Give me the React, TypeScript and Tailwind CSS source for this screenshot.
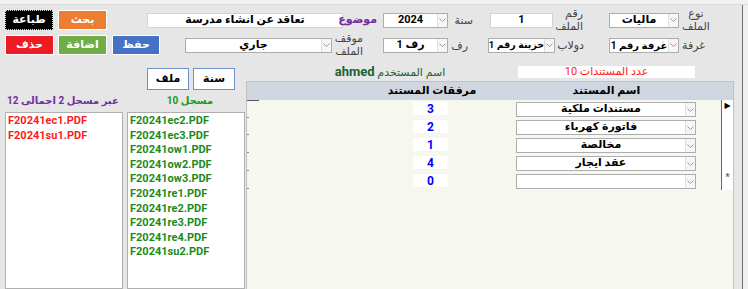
import React from 'react';

const Chevron = () => (
  <svg width="7" height="4" viewBox="0 0 7 4">
    <path d="M0.5 0.5 L3.5 3.5 L6.5 0.5" fill="none" stroke="#9a9a9a" strokeWidth="1" />
  </svg>
);

function Combo({ text, box, size = 'text-[11px]' }: { text: string; box: string; size?: string }) {
  return (
    <div className={`flex bg-white border border-[#adadad] ${box}`}>
      <div dir="rtl" className={`flex-1 flex items-center justify-center overflow-hidden whitespace-nowrap font-bold text-black ${size}`}>
        {text}
      </div>
      <div className="w-[10px] flex items-center justify-center border-l border-[#dedede] bg-[#f6f6f6]">
        <Chevron />
      </div>
    </div>
  );
}

function Btn({ label, cls }: { label: string; cls: string }) {
  return (
    <div className={`flex items-center justify-center h-[20px] border text-white font-bold text-[11px] ${cls}`}>
      {label}
    </div>
  );
}

function Label({ lines, cls }: { lines: string[]; cls: string }) {
  return (
    <div dir="rtl" className={`flex flex-col text-[11px] leading-[13px] text-[#444] whitespace-nowrap ${cls}`}>
      {lines.map((l) => (
        <span key={l}>{l}</span>
      ))}
    </div>
  );
}

const registered = [
  'F20241ec2.PDF',
  'F20241ec3.PDF',
  'F20241ow1.PDF',
  'F20241ow2.PDF',
  'F20241ow3.PDF',
  'F20241re1.PDF',
  'F20241re2.PDF',
  'F20241re3.PDF',
  'F20241re4.PDF',
  'F20241su2.PDF',
];
const missing = ['F20241ec1.PDF', 'F20241su1.PDF'];

const docs = [
  { name: 'مستندات ملكية', count: '3' },
  { name: 'فاتورة كهرباء', count: '2' },
  { name: 'مخالصة', count: '1' },
  { name: 'عقد ايجار', count: '4' },
  { name: '', count: '0' },
];

export default function App() {
  return (
    <div className="w-[748px] h-[289px] overflow-hidden bg-[#e6e6e6] font-[family-name:Roboto,DejaVu_Sans,sans-serif]">
      {/* top strip */}
      <div className="h-[5px] bg-[#f2f2f2] border-b border-[#dcdcdc]" />

      <div className="flex h-[284px]">
        <div className="w-[742px] flex flex-col">
          {/* header fields row 1 */}
          <div className="flex items-center h-[20px] mt-[5px]">
            <Btn label="طباعة" cls="ml-[5px] w-[48px] bg-black border-dotted border-[#d8d8d8]" />
            <Btn label="بحث" cls="ml-[5px] w-[49px] bg-[#ed7d31] border-white" />
            <div dir="rtl" className="ml-[40px] w-[196px] h-[15px] bg-white border border-[#d4d4d4] flex items-center justify-center font-bold text-[11px] text-black">
              تعاقد عن انشاء مدرسة
            </div>
            <div dir="rtl" className="ml-[3px] w-[31px] text-[11px] font-bold text-[#7030a0] text-center">موضوع</div>
            <Combo text="2024" box="ml-[6px] w-[65px] h-[15px]" />
            <Label lines={['سنة']} cls="ml-[5px] w-[20px] items-start" />
            <div className="ml-[17px] w-[63px] h-[15px] bg-white border border-[#d4d4d4] flex items-center justify-center font-bold text-[11px] text-black">
              1
            </div>
            <Label lines={['رقم', 'الملف']} cls="ml-[4px] w-[26px] items-start" />
            <Combo text="ماليات" box="ml-[26px] w-[70px] h-[15px]" />
            <Label lines={['نوع', 'الملف']} cls="ml-[5px] w-[24px] items-center" />
          </div>

          {/* header fields row 2 */}
          <div className="flex items-center h-[20px] mt-[5px]">
            <Btn label="حذف" cls="ml-[5px] w-[49px] bg-[#ed1c24] border-white" />
            <Btn label="اضافة" cls="ml-[4px] w-[49px] bg-[#70ad47] border-white" />
            <Btn label="حفظ" cls="ml-[5px] w-[48px] bg-[#4472c4] border-white" />
            <Combo text="جاري" box="ml-[25px] w-[147px] h-[15px]" />
            <Label lines={['موقف', 'الملف']} cls="ml-[5px] w-[26px] items-start" />
            <Combo text="رف 1" box="ml-[20px] w-[65px] h-[15px]" />
            <Label lines={['رف']} cls="ml-[4px] w-[16px] items-start" />
            <Combo text="خزينة رقم 1" box="ml-[20px] w-[67px] h-[15px]" size="text-[9.5px]" />
            <Label lines={['دولاب']} cls="ml-[3px] w-[26px] items-start" />
            <Combo text="غرفة رقم 1" box="ml-[25px] w-[70px] h-[15px]" size="text-[10px]" />
            <Label lines={['غرفة']} cls="ml-[4px] w-[22px] items-start" />
          </div>

          {/* lower area */}
          <div className="flex mt-[7px] h-[227px]">
            {/* files column */}
            <div className="w-[246px] flex flex-col">
              <div className="flex mt-[6px]">
                <div className="ml-[147px] w-[42px] h-[22px] bg-white border border-[#6f8fcf] flex items-center justify-center font-bold text-[11px] text-black">
                  ملف
                </div>
                <div className="ml-[4px] w-[42px] h-[22px] bg-white border border-[#6f8fcf] flex items-center justify-center font-bold text-[11px] text-black">
                  سنة
                </div>
              </div>
              <div className="flex items-center mt-[3px] h-[14px] text-[10px] font-bold">
                <div dir="rtl" className="ml-[5px] w-[118px] text-left pl-[2px] text-[#7030a0] whitespace-nowrap">
                  غير مسجل 2 اجمالى 12
                </div>
                <div dir="rtl" className="ml-[27px] w-[80px] text-center text-[#1a9a1a]">
                  مسجل 10
                </div>
              </div>
              <div className="flex mt-[5px] h-[180px]">
                <div className="ml-[5px] w-[118px] bg-white border border-[#b0b0b0] pl-[2px] pt-[1px] flex flex-col text-[11px] leading-[14.6px] font-bold text-[#ff1a1a]">
                  {missing.map((f) => (
                    <span key={f}>{f}</span>
                  ))}
                </div>
                <div className="ml-[4px] w-[118px] bg-white border border-[#b0b0b0] pl-[2px] pt-[1px] flex flex-col text-[11px] leading-[14.6px] font-bold text-[#1b8a1b]">
                  {registered.map((f) => (
                    <span key={f}>{f}</span>
                  ))}
                </div>
              </div>
            </div>

            {/* documents column */}
            <div className="w-[488px] flex flex-col">
              <div className="flex items-center h-[19px]">
                <div dir="rtl" className="ml-[60px] w-[168px] text-center text-[11px] text-[#215f33] whitespace-nowrap">
                  اسم المستخدم <span className="font-bold text-[13px]">ahmed</span>
                </div>
                <div dir="rtl" className="ml-[44px] w-[177px] h-[12px] bg-white flex items-center justify-center text-[11px] leading-[12px] text-[#ff1a1a]">
                  عدد المستندات 10
                </div>
              </div>

              {/* subform */}
              <div className="flex-1 flex flex-col bg-[#f6f7ef] border-l border-t border-r border-[#c2c2c2]">
                <div className="flex items-center h-[18px] bg-[#d0d6e0] text-[11px] font-bold text-black">
                  <div dir="rtl" className="ml-[103px] w-[164px] text-center">مرفقات المستند</div>
                  <div dir="rtl" className="ml-[2px] w-[181px] text-center">اسم المستند</div>
                </div>
                {docs.map((d, i) => (
                  <div key={i} className="flex h-[18px]">
                    <div className={`w-[12px] ${i === 0 ? 'border-t border-[#555]' : ''}`}>
                      <div className="w-[2px] h-[17px] border-b border-[#888]" />
                    </div>
                    <div className="ml-[154px] w-[35px] h-[13px] mt-[2px] bg-white flex items-center justify-center text-[12px] font-bold text-[#0000ff]">
                      {d.count}
                    </div>
                    <Combo text={d.name} box="ml-[68px] w-[181px] h-[15px] mt-[2px]" />
                    <div className="ml-[25px] w-[12px] bg-white border-l border-[#666] flex justify-center">
                      {i === 0 && <span className="text-[8px] leading-[12px] text-black">▶</span>}
                      {i === 4 && <span className="text-[9px] leading-[10px] font-bold text-[#555]">*</span>}
                    </div>
                  </div>
                ))}
              </div>
            </div>
          </div>
        </div>
        <div className="w-[1px] bg-[#707070]" />
        <div className="flex-1 bg-[#f0f0f0]" />
      </div>
    </div>
  );
}
